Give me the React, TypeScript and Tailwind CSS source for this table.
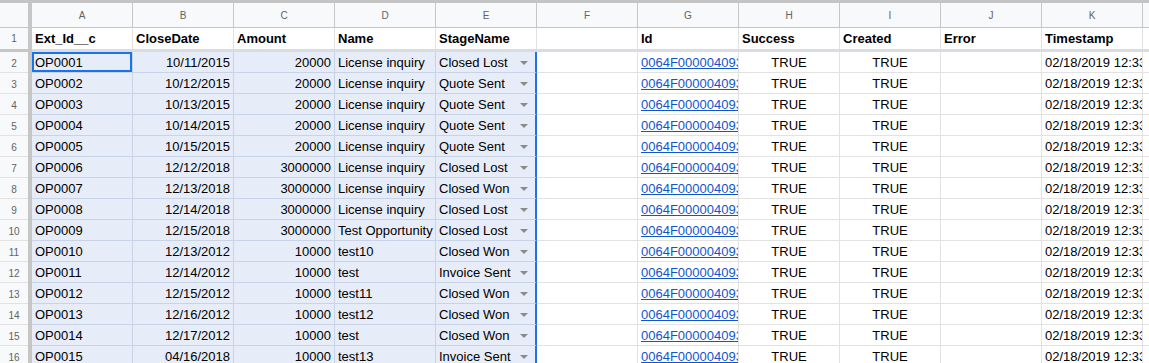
import React from 'react';

type Row = {
  n: number;
  ext: string;
  date: string;
  amount: string;
  name: string;
  stage: string;
};

const rows: Row[] = [
  { n: 2, ext: 'OP0001', date: '10/11/2015', amount: '20000', name: 'License inquiry', stage: 'Closed Lost' },
  { n: 3, ext: 'OP0002', date: '10/12/2015', amount: '20000', name: 'License inquiry', stage: 'Quote Sent' },
  { n: 4, ext: 'OP0003', date: '10/13/2015', amount: '20000', name: 'License inquiry', stage: 'Quote Sent' },
  { n: 5, ext: 'OP0004', date: '10/14/2015', amount: '20000', name: 'License inquiry', stage: 'Quote Sent' },
  { n: 6, ext: 'OP0005', date: '10/15/2015', amount: '20000', name: 'License inquiry', stage: 'Quote Sent' },
  { n: 7, ext: 'OP0006', date: '12/12/2018', amount: '3000000', name: 'License inquiry', stage: 'Closed Lost' },
  { n: 8, ext: 'OP0007', date: '12/13/2018', amount: '3000000', name: 'License inquiry', stage: 'Closed Won' },
  { n: 9, ext: 'OP0008', date: '12/14/2018', amount: '3000000', name: 'License inquiry', stage: 'Closed Lost' },
  { n: 10, ext: 'OP0009', date: '12/15/2018', amount: '3000000', name: 'Test Opportunity', stage: 'Closed Lost' },
  { n: 11, ext: 'OP0010', date: '12/13/2012', amount: '10000', name: 'test10', stage: 'Closed Won' },
  { n: 12, ext: 'OP0011', date: '12/14/2012', amount: '10000', name: 'test', stage: 'Invoice Sent' },
  { n: 13, ext: 'OP0012', date: '12/15/2012', amount: '10000', name: 'test11', stage: 'Closed Won' },
  { n: 14, ext: 'OP0013', date: '12/16/2012', amount: '10000', name: 'test12', stage: 'Closed Won' },
  { n: 15, ext: 'OP0014', date: '12/17/2012', amount: '10000', name: 'test', stage: 'Closed Won' },
  { n: 16, ext: 'OP0015', date: '04/16/2018', amount: '10000', name: 'test13', stage: 'Invoice Sent' },
];

const letters = ['A', 'B', 'C', 'D', 'E', 'F', 'G', 'H', 'I', 'J', 'K'];
const headers = ['Ext_Id__c', 'CloseDate', 'Amount', 'Name', 'StageName', '', 'Id', 'Success', 'Created', 'Error', 'Timestamp'];

// selected range cells (A..E)
const sel = 'w-[101px] shrink-0 h-full border-r border-b border-[#c9d3e8] bg-[#e7edf8] px-[3px] pt-[2px] flex items-center overflow-hidden whitespace-nowrap';
const plain = 'w-[101px] shrink-0 h-full border-r border-b border-[#e2e2e2] px-[3px] pt-[2px] flex items-center overflow-hidden whitespace-nowrap';

const Band = () => <div className="w-[4px] shrink-0 h-full bg-[#c6c6c6]" />;

const Arrow = () => (
  <svg width="8" height="4" viewBox="0 0 8 4" className="ml-auto mr-[4px] shrink-0">
    <path d="M0 0 L8 0 L4 4 Z" fill="#8a8a8a" />
  </svg>
);

export default function App() {
  return (
    <div className="w-[1149px] h-[363px] overflow-hidden bg-white text-[13px] text-black font-['Liberation_Sans',Arial,sans-serif]">
      <div className="h-[3px] bg-[#c4c4c4]" />

      {/* column letters */}
      <div className="flex h-[25px]">
        <div className="w-[28px] shrink-0 h-full bg-[#f8f9fa] border-b border-[#c4c7c5]" />
        <Band />
        {letters.map((l) => (
          <div
            key={l}
            className="w-[101px] shrink-0 h-full bg-[#f8f9fa] border-r border-b border-[#c4c7c5] flex items-center justify-center text-[10px] text-[#5f6368]"
          >
            {l}
          </div>
        ))}
        <div className="flex-1 h-full bg-[#f8f9fa] border-b border-[#c4c7c5]" />
      </div>

      {/* row 1 (headers) */}
      <div className="flex h-[21px]">
        <div className="w-[28px] shrink-0 h-full bg-[#f8f9fa] flex items-center justify-center text-[10px] text-[#5f6368]">
          1
        </div>
        <Band />
        {headers.map((h, i) => (
          <div key={i} className="w-[101px] shrink-0 h-full border-r border-[#e2e2e2] px-[3px] flex items-center font-bold whitespace-nowrap overflow-hidden">
            {h}
          </div>
        ))}
        <div className="flex-1 h-full" />
      </div>

      {/* frozen divider */}
      <div className="flex h-[3px]">
        <div className="w-[32px] shrink-0 bg-[#c6c6c6]" />
        <div className="flex-1 bg-[#d9dde3]" />
      </div>

      {rows.map((r) => (
        <div key={r.n} className="flex h-[21px]">
          <div className="w-[28px] shrink-0 h-full bg-[#f8f9fa] border-b border-[#e2e2e2] pt-[2px] flex items-center justify-center text-[10px] text-[#5f6368]">
            {r.n}
          </div>
          <Band />
          <div className={`${sel} relative`}>
            {r.ext}
            {r.n === 2 && <div className="absolute inset-0 border-2 border-[#1a73e8]" />}
          </div>
          <div className={`${sel} justify-end`}>{r.date}</div>
          <div className={`${sel} justify-end`}>{r.amount}</div>
          <div className={sel}>{r.name}</div>
          <div className="w-[101px] shrink-0 h-full border-r-2 border-r-[#1a73e8] border-b border-b-[#c9d3e8] bg-[#e7edf8] px-[3px] pt-[2px] flex items-center overflow-hidden whitespace-nowrap">
            {r.stage}
            <Arrow />
          </div>
          <div className={plain} />
          <div className={plain}>
            <span className="text-[#1155cc] underline">0064F0000040933</span>
          </div>
          <div className={`${plain} justify-center`}>TRUE</div>
          <div className={`${plain} justify-center`}>TRUE</div>
          <div className={plain} />
          <div className={plain}>02/18/2019 12:33</div>
          <div className="flex-1 h-full border-b border-[#e2e2e2]" />
        </div>
      ))}
    </div>
  );
}
